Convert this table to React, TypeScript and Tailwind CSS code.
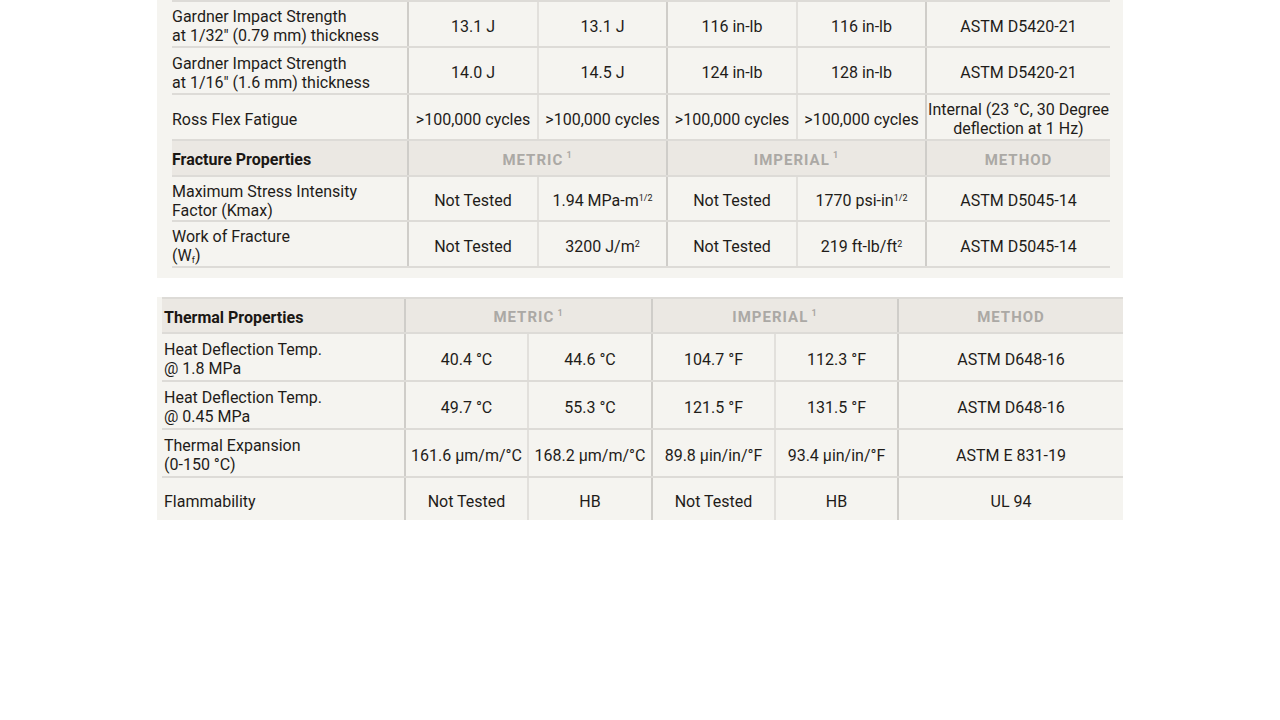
import React from "react";

type Cell = React.ReactNode;

const thick = "border-l-2 border-[#cfcdc9]";
const thin = "border-l-2 border-[#e2e0dc]";

const Sup = ({ children }: { children: React.ReactNode }) => (
  <sup className="text-[9px] relative -top-[5px]">{children}</sup>
);

const topCols = "grid grid-cols-[235px_130px_129px_130px_129px_185px]";
const bottomCols = "grid grid-cols-[242px_123px_124px_123px_123px_226px]";

const DataRow = ({
  cols,
  label,
  cells,
  h,
  pad,
  top = "pt-[4px]",
}: {
  cols: string;
  label: Cell;
  cells: Cell[];
  h: string;
  pad: string;
  top?: string;
}) => (
  <div className={`${cols} ${h} border-b-2 border-[#dddbd7]`}>
    <div className={`flex items-center ${pad} ${top} leading-[19px]`}>{label}</div>
    {cells.map((c, i) => (
      <div
        key={i}
        className={`flex items-center justify-center text-center leading-[19px] ${top} ${
          i % 2 === 0 ? thick : thin
        }`}
      >
        {c}
      </div>
    ))}
  </div>
);

const HeaderRow = ({
  title,
  h,
  pad,
  widths,
}: {
  title: string;
  h: string;
  pad: string;
  widths: string;
}) => (
  <div className={`grid ${widths} ${h} bg-[#ebe8e3] border-b-2 border-[#dddbd7]`}>
    <div className={`flex items-center ${pad} pt-[4px] font-bold text-[#1a1714]`}>{title}</div>
    <div className={`flex items-center justify-center pt-[4px] ${thick} text-[15px] font-bold tracking-[1px] text-[#aba9a5]`}>
      METRIC<Sup>&nbsp;1</Sup>
    </div>
    <div className={`flex items-center justify-center pt-[4px] ${thick} text-[15px] font-bold tracking-[1px] text-[#aba9a5]`}>
      IMPERIAL<Sup>&nbsp;1</Sup>
    </div>
    <div className={`flex items-center justify-center pt-[4px] ${thick} text-[15px] font-bold tracking-[1px] text-[#aba9a5]`}>
      METHOD
    </div>
  </div>
);

export default function App() {
  return (
    <div
      className="w-[1280px] h-[720px] bg-white text-[16px] text-[#1f1c19]"
      style={{ fontFamily: "Roboto, 'Liberation Sans', sans-serif" }}
    >
      {/* mechanical + fracture panel */}
      <div className="ml-[157px] w-[966px] h-[278px] bg-[#f5f4f0] pl-[15px]">
        <div className="w-[938px]">
          <div className={`${topCols} h-[2px] bg-[#dddbd7]`} />
          <DataRow
            cols={topCols}
            h="h-[46px]"
            pad=""
            label={
              <span>
                Gardner Impact Strength
                <br />
                at 1/32" (0.79 mm) thickness
              </span>
            }
            cells={["13.1 J", "13.1 J", "116 in-lb", "116 in-lb", "ASTM D5420-21"]}
          />
          <DataRow
            cols={topCols}
            h="h-[47px]"
            pad=""
            label={
              <span>
                Gardner Impact Strength
                <br />
                at 1/16" (1.6 mm) thickness
              </span>
            }
            cells={["14.0 J", "14.5 J", "124 in-lb", "128 in-lb", "ASTM D5420-21"]}
          />
          <DataRow
            cols={topCols}
            h="h-[46px]"
            pad=""
            label="Ross Flex Fatigue"
            cells={[
              ">100,000 cycles",
              ">100,000 cycles",
              ">100,000 cycles",
              ">100,000 cycles",
              <span>
                Internal (23 °C, 30 Degree
                <br />
                deflection at 1 Hz)
              </span>,
            ]}
          />
          <HeaderRow
            title="Fracture Properties"
            h="h-[36px]"
            pad=""
            widths="grid-cols-[235px_259px_259px_185px]"
          />
          <DataRow
            cols={topCols}
            h="h-[45px]"
            pad=""
            label={
              <span>
                Maximum Stress Intensity
                <br />
                Factor (Kmax)
              </span>
            }
            cells={[
              "Not Tested",
              <span>
                1.94 MPa-m<Sup>1/2</Sup>
              </span>,
              "Not Tested",
              <span>
                1770 psi-in<Sup>1/2</Sup>
              </span>,
              "ASTM D5045-14",
            ]}
          />
          <DataRow
            cols={topCols}
            h="h-[46px]"
            pad=""
            label={
              <span>
                Work of Fracture
                <br />
                (W<sub className="text-[9px]">f</sub>)
              </span>
            }
            cells={[
              "Not Tested",
              <span>
                3200 J/m<Sup>2</Sup>
              </span>,
              "Not Tested",
              <span>
                219 ft-lb/ft<Sup>2</Sup>
              </span>,
              "ASTM D5045-14",
            ]}
          />
        </div>
      </div>

      {/* thermal panel */}
      <div className="mt-[19px] ml-[157px] w-[966px] h-[223px] bg-[#f5f4f0] pl-[5px] overflow-hidden">
        <div className="w-[961px] border-t-2 border-[#dddbd7]">
          <HeaderRow
            title="Thermal Properties"
            h="h-[35px]"
            pad="pl-[2px]"
            widths="grid-cols-[242px_247px_246px_226px]"
          />
          <DataRow
            cols={bottomCols}
            h="h-[48px]"
            pad="pl-[2px]"
            label={
              <span>
                Heat Deflection Temp.
                <br />@ 1.8 MPa
              </span>
            }
            cells={["40.4 °C", "44.6 °C", "104.7 °F", "112.3 °F", "ASTM D648-16"]}
          />
          <DataRow
            cols={bottomCols}
            h="h-[48px]"
            pad="pl-[2px]"
            label={
              <span>
                Heat Deflection Temp.
                <br />@ 0.45 MPa
              </span>
            }
            cells={["49.7 °C", "55.3 °C", "121.5 °F", "131.5 °F", "ASTM D648-16"]}
          />
          <DataRow
            cols={bottomCols}
            h="h-[48px]"
            pad="pl-[2px]"
            label={
              <span>
                Thermal Expansion
                <br />
                (0-150 °C)
              </span>
            }
            cells={[
              "161.6 µm/m/°C",
              "168.2 µm/m/°C",
              "89.8 µin/in/°F",
              "93.4 µin/in/°F",
              "ASTM E 831-19",
            ]}
          />
          <DataRow
            cols={bottomCols}
            h="h-[47px]"
            pad="pl-[2px]"
            top="pt-[2px]"
            label="Flammability"
            cells={["Not Tested", "HB", "Not Tested", "HB", "UL 94"]}
          />
        </div>
      </div>
    </div>
  );
}
